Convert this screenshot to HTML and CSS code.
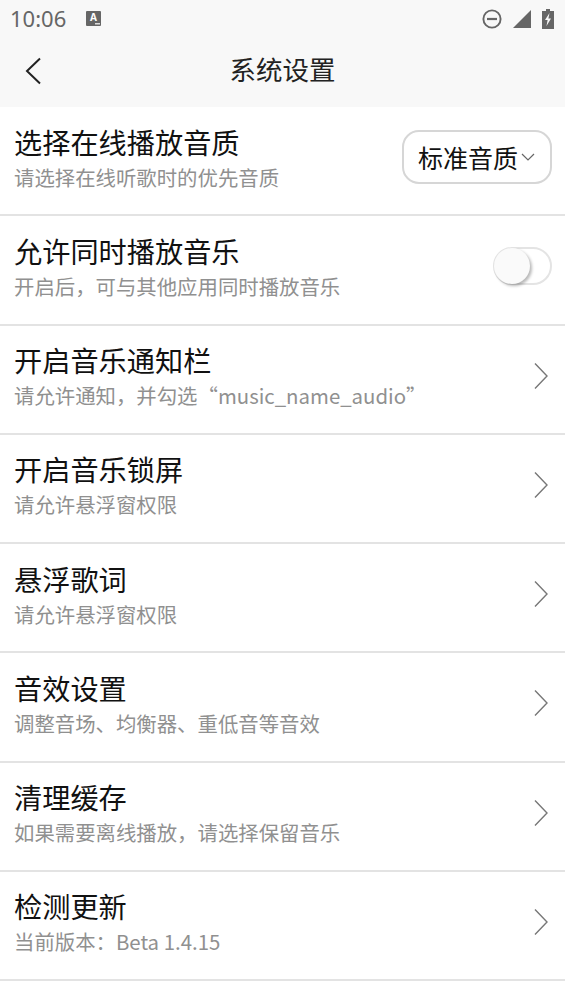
FILE: index.html
```html
<!DOCTYPE html>
<html lang="zh-CN">
<head>
<meta charset="utf-8">
<title>系统设置</title>
<link rel="stylesheet" href="styles.css">
</head>
<body>
<div class="top">
  <div class="status">
    <span class="time">10:06</span>
    <svg class="a-icon" width="15" height="15" viewBox="0 0 15 15"><rect width="15" height="15" rx="1" fill="#666"/><text x="7.500" y="10" class="a-text">A</text><rect x="9" y="12" width="5" height="1.500" fill="#ddd"/></svg>
    <span class="spacer"></span>
    <svg class="dnd" width="20" height="20" viewBox="0 0 20 20"><circle cx="10" cy="10" r="8.600" fill="none" stroke="#666" stroke-width="1.900"/><rect x="5" y="8.900" width="10" height="2.200" fill="#666"/></svg>
    <svg class="signal" width="18" height="18" viewBox="0 0 18 18"><path d="M0 18 L18 0 V18 Z" fill="#666"/></svg>
    <svg class="batt" width="12" height="20" viewBox="0 0 12 20"><path d="M4 0h4v2h4v18H0V2h4z" fill="#666"/><path d="M7.500 4 3 11h2.600L4.500 17 9 9.500H6.400z" fill="#f8f8f8"/></svg>
  </div>
  <div class="nav">
    <svg class="back" width="18" height="28" viewBox="0 0 18 28"><path d="M16 1.500 3 14 16 26.500" fill="none" stroke="#222" stroke-width="2"/></svg>
    <h1>系统设置</h1>
  </div>
</div>
<ul class="list">
  <li class="row">
    <div class="txt"><div class="t">选择在线播放音质</div><div class="s">请选择在线听歌时的优先音质</div></div>
    <div class="select"><span>标准音质</span><svg width="14" height="8" viewBox="0 0 14 8"><path d="M1 1 7 7 13 1" fill="none" stroke="#666" stroke-width="1.200"/></svg></div>
  </li>
  <li class="row">
    <div class="txt"><div class="t">允许同时播放音乐</div><div class="s">开启后，可与其他应用同时播放音乐</div></div>
    <div class="switch"><div class="knob"></div></div>
  </li>
  <li class="row">
    <div class="txt"><div class="t">开启音乐通知栏</div><div class="s">请允许通知，并勾选“music_name_audio”</div></div>
    <svg class="chev" width="16" height="28" viewBox="0 0 16 28"><path d="M2 1.500 14 14 2 26.500" fill="none" stroke="#777" stroke-width="1.400"/></svg>
  </li>
  <li class="row">
    <div class="txt"><div class="t">开启音乐锁屏</div><div class="s">请允许悬浮窗权限</div></div>
    <svg class="chev" width="16" height="28" viewBox="0 0 16 28"><path d="M2 1.500 14 14 2 26.500" fill="none" stroke="#777" stroke-width="1.400"/></svg>
  </li>
  <li class="row">
    <div class="txt"><div class="t">悬浮歌词</div><div class="s">请允许悬浮窗权限</div></div>
    <svg class="chev" width="16" height="28" viewBox="0 0 16 28"><path d="M2 1.500 14 14 2 26.500" fill="none" stroke="#777" stroke-width="1.400"/></svg>
  </li>
  <li class="row">
    <div class="txt"><div class="t">音效设置</div><div class="s">调整音场、均衡器、重低音等音效</div></div>
    <svg class="chev" width="16" height="28" viewBox="0 0 16 28"><path d="M2 1.500 14 14 2 26.500" fill="none" stroke="#777" stroke-width="1.400"/></svg>
  </li>
  <li class="row">
    <div class="txt"><div class="t">清理缓存</div><div class="s">如果需要离线播放，请选择保留音乐</div></div>
    <svg class="chev" width="16" height="28" viewBox="0 0 16 28"><path d="M2 1.500 14 14 2 26.500" fill="none" stroke="#777" stroke-width="1.400"/></svg>
  </li>
  <li class="row">
    <div class="txt"><div class="t">检测更新</div><div class="s">当前版本：Beta 1.4.15</div></div>
    <svg class="chev" width="16" height="28" viewBox="0 0 16 28"><path d="M2 1.500 14 14 2 26.500" fill="none" stroke="#777" stroke-width="1.400"/></svg>
  </li>
</ul>
</body>
</html>
```
FILE: styles.css
```css
* { box-sizing: border-box; }
html, body { margin: 0; padding: 0; }
body {
  width: 565px;
  height: 1004px;
  overflow: hidden;
  background: #fff;
  font-family: "Noto Sans CJK SC", "Noto Sans", sans-serif;
  color: #111;
}
.top { background: #f8f8f8; height: 107px; }
.status {
  height: 38px;
  display: flex;
  align-items: center;
  padding: 0 11px 0 10px;
}
.time { font-family: "Noto Sans", sans-serif; font-size: 22px; color: #666; line-height: 36px; margin-top: -2px; }
.a-icon { margin-left: 20px; margin-top: -1px; }
.a-text { font: bold 10px "Noto Sans", sans-serif; fill: #fff; text-anchor: middle; }
.spacer { flex: 1; }
.dnd { margin-right: 11px; }
.signal { margin-right: 11px; margin-top: -1px; }
.nav {
  height: 69px;
  position: relative;
  display: flex;
  align-items: center;
  justify-content: center;
  padding-bottom: 6px;
}
.back { position: absolute; left: 24px; top: 19px; }
h1 { margin: 0; font-size: 26.500px; font-weight: 400; color: #222; line-height: 1; }
.list { list-style: none; margin: 0; padding: 0; }
.row {
  height: 109.250px;
  display: flex;
  align-items: center;
  padding: 0 16px 0 14px;
  border-bottom: 2px solid #e3e3e3;
}
.txt { flex: 1; min-width: 0; padding-bottom: 7px; }
.t { font-size: 28.200px; line-height: 36px; color: #111; }
.s { font-size: 20.400px; line-height: 28px; color: #909090; margin-top: 3px; }
.select {
  width: 150px;
  height: 54px;
  margin: -7px -3px 0 0;
  border: 2px solid #d6d6d6;
  border-radius: 17px;
  display: flex;
  align-items: center;
  padding-left: 14px;
  font-size: 25px;
  color: #111;
  gap: 3px;
}
.switch {
  width: 59px;
  height: 38px;
  margin: -7px -3px 0 0;
  border: 2px solid #e4e4e4;
  border-radius: 19px;
  position: relative;
}
.knob {
  position: absolute;
  left: -1px;
  top: -1px;
  width: 36px;
  height: 36px;
  border-radius: 50%;
  background: #fafafa;
  box-shadow: 2px 2px 3px rgba(0,0,0,.28);
}
.chev { flex: none; margin-top: -7px; }
```
